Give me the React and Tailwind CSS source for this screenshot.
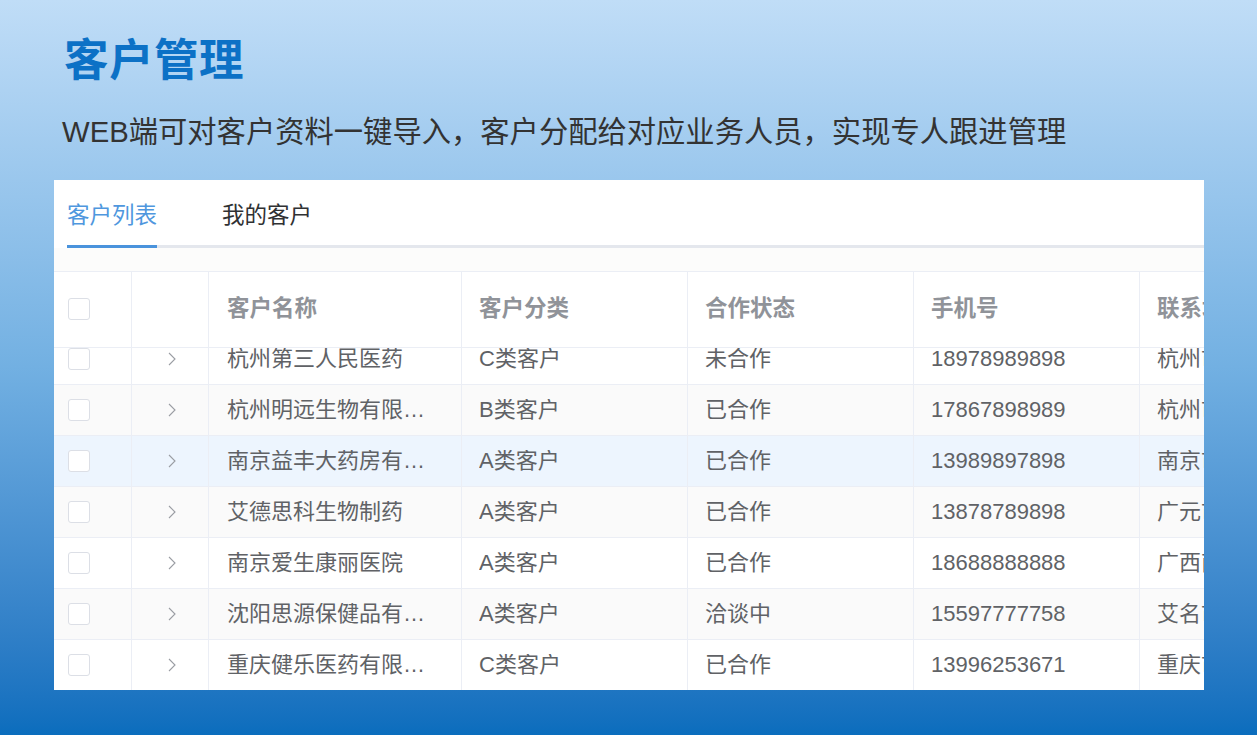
import React from "react";

const FONT = { fontFamily: "'Liberation Sans', 'Noto Sans CJK SC', sans-serif" };

const columns = [
  { key: "check", label: "", className: "w-[78px] pl-[14px]" },
  { key: "expand", label: "", className: "w-[77px] justify-center pl-[4px]" },
  { key: "name", label: "客户名称", className: "w-[253px] pl-[18px] pr-[29px]" },
  { key: "type", label: "客户分类", className: "w-[226px] pl-[17px] pr-[20px]" },
  { key: "status", label: "合作状态", className: "w-[226px] pl-[17px] pr-[20px]" },
  { key: "phone", label: "手机号", className: "w-[226px] pl-[17px] pr-[20px]" },
  { key: "contact", label: "联系地址", className: "w-[226px] pl-[17px] pr-[20px]" },
];

const customers = [
  { name: "杭州第三人民医药", type: "C类客户", status: "未合作", phone: "18978989898", contact: "杭州市西湖区" },
  { name: "杭州明远生物有限公司", type: "B类客户", status: "已合作", phone: "17867898989", contact: "杭州市滨江区" },
  { name: "南京益丰大药房有限公司", type: "A类客户", status: "已合作", phone: "13989897898", contact: "南京市鼓楼区" },
  { name: "艾德思科生物制药", type: "A类客户", status: "已合作", phone: "13878789898", contact: "广元市利州区" },
  { name: "南京爱生康丽医院", type: "A类客户", status: "已合作", phone: "18688888888", contact: "广西南宁市" },
  { name: "沈阳思源保健品有限公司", type: "A类客户", status: "洽谈中", phone: "15597777758", contact: "艾名市和平区" },
  { name: "重庆健乐医药有限公司", type: "C类客户", status: "已合作", phone: "13996253671", contact: "重庆市渝中区" },
];

function Checkbox() {
  return <span className="block w-[22px] h-[22px] rounded-[3px] border border-[#dcdfe6] bg-white" />;
}

function Chevron() {
  return (
    <svg width="10" height="16" viewBox="0 0 10 16" fill="none">
      <polyline points="2,2 8,8 2,14" stroke="#9a9da3" strokeWidth="1.1" />
    </svg>
  );
}

function Cell({ col, children }) {
  return (
    <div className={`${col.className} shrink-0 flex items-center border-r border-[#ebeef5] min-w-0`}>
      {children}
    </div>
  );
}

function HeaderRow() {
  return (
    <div className="flex h-[77px] border-t border-b border-[#ebeef5] bg-white">
      {columns.map((col) => (
        <Cell key={col.key} col={col}>
          {col.key === "check" ? (
            <Checkbox />
          ) : (
            <span className="text-[22.5px] leading-none font-bold text-[#909399] whitespace-nowrap">{col.label}</span>
          )}
        </Cell>
      ))}
    </div>
  );
}

function BodyRow({ row, index }) {
  let bg = "bg-white";
  if (index === 2) bg = "bg-[#edf5fe]";
  else if (index % 2 === 1) bg = "bg-[#fafafa]";

  return (
    <div className={`flex h-[51px] border-b border-[#ebeef5] ${bg}`}>
      {columns.map((col) => (
        <Cell key={col.key} col={col}>
          {col.key === "check" && <Checkbox />}
          {col.key === "expand" && <Chevron />}
          {col.key !== "check" && col.key !== "expand" && (
            <span className="block text-[22px] leading-none text-[#606266] whitespace-nowrap overflow-hidden text-ellipsis">
              {row[col.key]}
            </span>
          )}
        </Cell>
      ))}
    </div>
  );
}

export default function App() {
  return (
    <div
      className="w-[1257px] h-[735px] overflow-hidden bg-gradient-to-b from-[#c0ddf7] via-[#72b0e2] to-[#0a6dbd]"
      style={FONT}
    >
      {/* Heading */}
      <div className="h-[180px] pl-[64px] pt-[39px]">
        <h1 className="text-[44.5px] leading-none font-bold text-[#0c71c6] tracking-[0.5px]">客户管理</h1>
        <p className="mt-[33px] -ml-[2px] text-[29.3px] leading-none text-[#333333]">
          WEB端可对客户资料一键导入，客户分配给对应业务人员，实现专人跟进管理
        </p>
      </div>

      {/* Card */}
      <div className="ml-[54px] w-[1150px] h-[510px] bg-white overflow-hidden">
        {/* Tabs */}
        <div className="ml-[13px] flex gap-[65px] border-b-[3px] border-[#e4e7ed]">
          <div className="pt-[25px] pb-[17px] -mb-[3px] border-b-[3px] border-[#4a93dc] text-[22.5px] leading-none text-[#4f97de]">
            客户列表
          </div>
          <div className="pt-[25px] pb-[17px] text-[22.5px] leading-none text-[#303133]">我的客户</div>
        </div>

        <div className="h-[23px] bg-[#fcfcfb]" />

        {/* Table */}
        <div className="w-[1312px]">
          <HeaderRow />
          <div className="h-[343px] overflow-hidden">
            <div className="-mt-[14px]">
              {customers.map((row, i) => (
                <BodyRow key={i} row={row} index={i} />
              ))}
            </div>
          </div>
        </div>
      </div>
    </div>
  );
}
